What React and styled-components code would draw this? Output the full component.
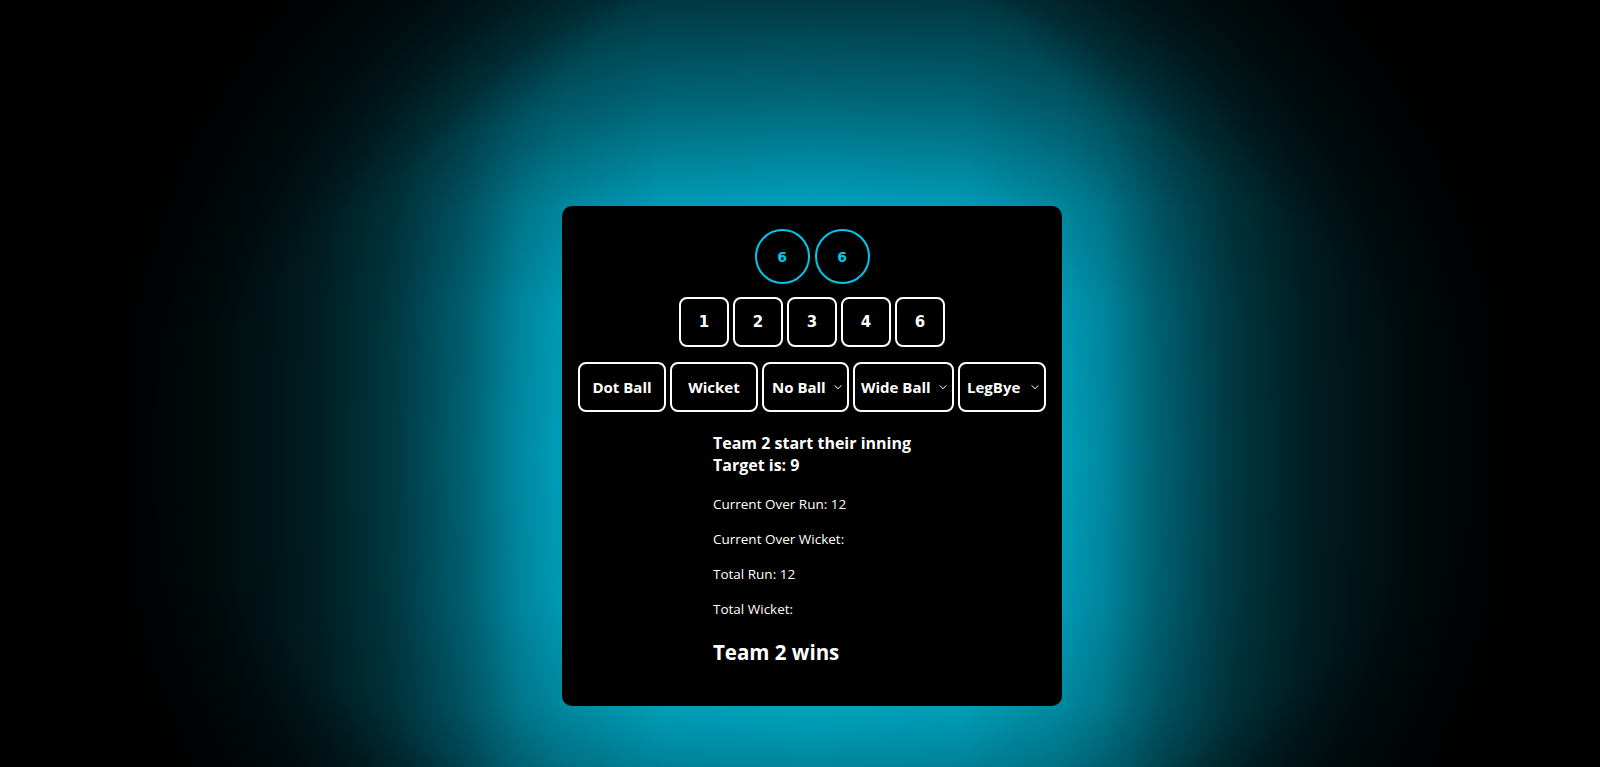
import React from "react";
import styled, { createGlobalStyle } from "styled-components";

const GlobalStyle = createGlobalStyle`
  html, body {
    margin: 0;
    padding: 0;
    background: #000;
  }
  body {
    font-family: "Open Sans", "Noto Sans", sans-serif;
    overflow: hidden;
  }
`;

/* Glow = horizontal cyan profile x vertical grey profile (multiply),
   then limited by a soft round falloff (darken) so the far corners stay dark. */
const Page = styled.main`
  min-height: 100vh;
  box-sizing: border-box;
  display: flex;
  justify-content: center;
  align-items: flex-start;
  padding: 206px 0 0 24px;
  background-image:
    radial-gradient(
      circle at 812px 456px,
      rgb(0, 190, 223) 300px,
      rgb(0, 162, 190) 360px,
      rgb(0, 130, 153) 395px,
      rgb(0, 102, 120) 425px,
      rgb(0, 74, 87) 456px,
      rgb(0, 44, 52) 500px,
      rgb(0, 24, 28) 550px,
      rgb(0, 12, 14) 600px,
      rgb(0, 4, 5) 660px,
      rgb(0, 0, 0) 720px
    ),
    linear-gradient(
      to bottom,
      rgb(77, 77, 77) 0px,
      rgb(140, 140, 140) 103px,
      rgb(184, 184, 184) 164px,
      rgb(214, 214, 214) 206px,
      rgb(247, 247, 247) 306px,
      rgb(255, 255, 255) 456px,
      rgb(247, 247, 247) 606px,
      rgb(219, 219, 219) 706px,
      rgb(179, 179, 179) 767px
    ),
    linear-gradient(
      to right,
      rgb(0, 0, 0) 112px,
      rgb(0, 10, 11) 212px,
      rgb(0, 29, 33) 312px,
      rgb(0, 57, 67) 394px,
      rgb(0, 97, 114) 466px,
      rgb(0, 137, 161) 520px,
      rgb(0, 158, 185) 562px,
      rgb(0, 184, 216) 662px,
      rgb(0, 190, 223) 812px,
      rgb(0, 184, 216) 962px,
      rgb(0, 158, 185) 1062px,
      rgb(0, 137, 161) 1104px,
      rgb(0, 97, 114) 1158px,
      rgb(0, 57, 67) 1230px,
      rgb(0, 29, 33) 1312px,
      rgb(0, 10, 11) 1412px,
      rgb(0, 0, 0) 1512px
    );
  background-blend-mode: darken, multiply, normal;
`;

const Card = styled.section`
  width: 500px;
  height: 500px;
  box-sizing: border-box;
  background: #000;
  border-radius: 10px;
  padding: 23px 16px 0;
  display: flex;
  flex-direction: column;
  align-items: center;
`;

const BallRow = styled.div`
  display: flex;
  gap: 5px;
`;

const Ball = styled.div`
  width: 55px;
  height: 55px;
  box-sizing: border-box;
  border: 2px solid #00c8ea;
  border-radius: 50%;
  display: flex;
  align-items: center;
  justify-content: center;
  color: #00c8ea;
  font: bold 14px "DejaVu Sans", Verdana, sans-serif;
`;

const RunRow = styled.div`
  display: flex;
  gap: 4px;
  margin-top: 13px;
`;

const RunButton = styled.button`
  width: 50px;
  height: 50px;
  box-sizing: border-box;
  padding: 0;
  background: #000;
  color: #fff;
  border: 2px solid #fff;
  border-radius: 8px;
  font: bold 15px "DejaVu Sans", Verdana, sans-serif;
  cursor: pointer;
`;

const ExtrasRow = styled.div`
  display: flex;
  gap: 4px;
  margin-top: 15px;
`;

const ExtraButton = styled.button`
  width: ${(p) => p.$w}px;
  height: 50px;
  box-sizing: border-box;
  padding: 0;
  background: #000;
  color: #fff;
  border: 2px solid #fff;
  border-radius: 8px;
  font: bold 15px "Open Sans", "Noto Sans", sans-serif;
  cursor: pointer;
`;

const SelectWrap = styled.div`
  position: relative;
  width: ${(p) => p.$w}px;
  height: 50px;
`;

const Select = styled.select`
  appearance: none;
  -webkit-appearance: none;
  width: 100%;
  height: 100%;
  box-sizing: border-box;
  margin: 0;
  padding: 0 0 0 ${(p) => p.$pad}px;
  background: #000;
  color: #fff;
  border: 2px solid #fff;
  border-radius: 8px;
  font: bold 15px "Open Sans", "Noto Sans", sans-serif;
  cursor: pointer;
  outline: none;
`;

const Chevron = styled.svg`
  position: absolute;
  right: 7px;
  top: 50%;
  width: 8px;
  height: 5px;
  transform: translateY(-50%);
  pointer-events: none;
`;

const Info = styled.div`
  width: fit-content;
  margin-top: 20px;
  color: #fff;
`;

const Heading = styled.h3`
  margin: 0;
  font-size: 16px;
  font-weight: 700;
  line-height: 22px;
`;

const Stat = styled.p`
  margin: ${(p) => (p.$first ? 18 : 15)}px 0 0;
  font-size: 13.5px;
  font-weight: 400;
  line-height: 20px;
`;

const Result = styled.h2`
  margin: 19px 0 0;
  font-size: 20.5px;
  font-weight: 700;
  line-height: 28px;
`;

const ExtraSelect = ({ label, width, pad, options }) => (
  <SelectWrap $w={width}>
    <Select $pad={pad} defaultValue={label}>
      <option value={label}>{label}</option>
      {options.map((o) => (
        <option key={o} value={o}>
          {o}
        </option>
      ))}
    </Select>
    <Chevron viewBox="0 0 8 5">
      <path d="M0.5 0.8 L4 4.2 L7.5 0.8" fill="none" stroke="#fff" strokeWidth="1" />
    </Chevron>
  </SelectWrap>
);

export default function App() {
  const runs = [1, 2, 3, 4, 6];
  const balls = [6, 6];
  return (
    <>
      <GlobalStyle />
      <Page>
        <Card>
          <BallRow>
            {balls.map((b, i) => (
              <Ball key={i}>{b}</Ball>
            ))}
          </BallRow>
          <RunRow>
            {runs.map((r) => (
              <RunButton key={r}>{r}</RunButton>
            ))}
          </RunRow>
          <ExtrasRow>
            <ExtraButton $w={88}>Dot Ball</ExtraButton>
            <ExtraButton $w={88}>Wicket</ExtraButton>
            <ExtraSelect label="No Ball" width={87} pad={8} options={["1", "2", "3", "4", "6"]} />
            <ExtraSelect label="Wide Ball" width={101} pad={6} options={["1", "2", "3", "4"]} />
            <ExtraSelect label="LegBye" width={88} pad={7} options={["1", "2", "3", "4"]} />
          </ExtrasRow>
          <Info>
            <Heading>
              Team 2 start their inning
              <br />
              Target is: 9
            </Heading>
            <Stat $first>Current Over Run: 12</Stat>
            <Stat>Current Over Wicket:</Stat>
            <Stat>Total Run: 12</Stat>
            <Stat>Total Wicket:</Stat>
            <Result>Team 2 wins</Result>
          </Info>
        </Card>
      </Page>
    </>
  );
}
